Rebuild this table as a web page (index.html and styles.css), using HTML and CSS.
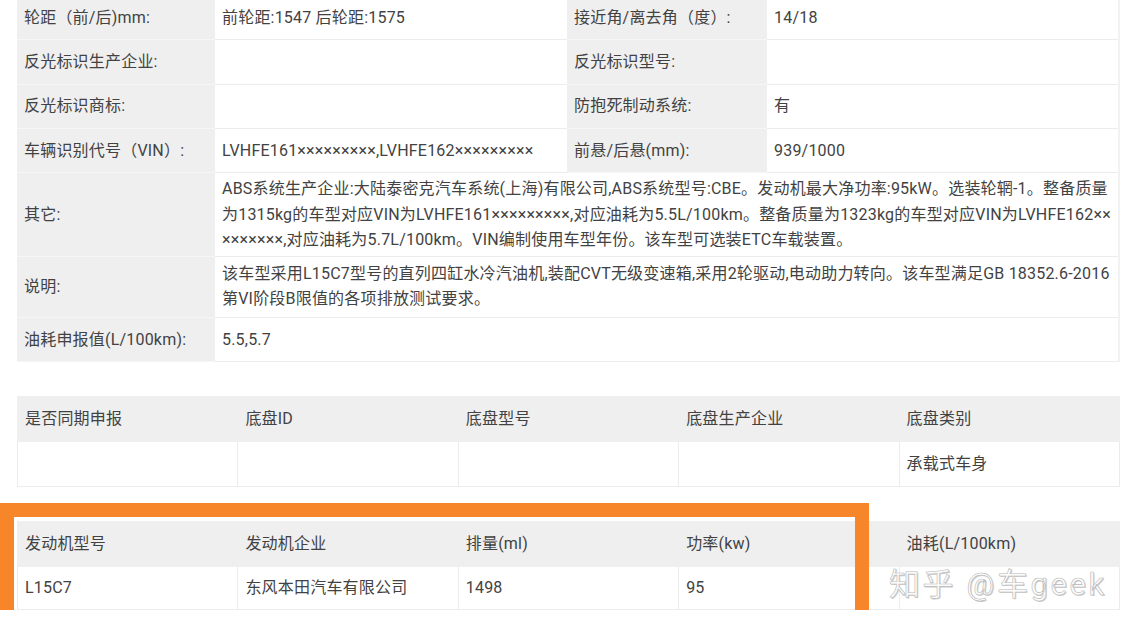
FILE: index.html
```html
<!DOCTYPE html>
<html lang="zh-CN">
  <head>
    <meta charset="UTF-8" />
    <meta name="viewport" content="width=device-width, initial-scale=1.0" />
    <title>车型参数</title>
    <link rel="stylesheet" href="styles.css">
  </head>
  <body>
    <div class="page">
      <table class="spec">
        <colgroup>
          <col class="c-label" />
          <col class="c-value" />
          <col class="c-label2" />
          <col class="c-value" />
        </colgroup>
        <tr>
          <td class="label">轮距（前/后)mm:</td>
          <td>前轮距:1547 后轮距:1575</td>
          <td class="label">接近角/离去角（度）:</td>
          <td>14/18</td>
        </tr>
        <tr>
          <td class="label">反光标识生产企业:</td>
          <td></td>
          <td class="label">反光标识型号:</td>
          <td></td>
        </tr>
        <tr>
          <td class="label">反光标识商标:</td>
          <td></td>
          <td class="label">防抱死制动系统:</td>
          <td>有</td>
        </tr>
        <tr>
          <td class="label">车辆识别代号（VIN）:</td>
          <td>LVHFE161×××××××××,LVHFE162×××××××××</td>
          <td class="label">前悬/后悬(mm):</td>
          <td>939/1000</td>
        </tr>
        <tr>
          <td class="label">其它:</td>
          <td colspan="3" class="long">ABS系统生产企业:大陆泰密克汽车系统(上海)有限公司,ABS系统型号:CBE。发动机最大净功率:95kW。选装轮辋-1。整备质量为1315kg的车型对应VIN为LVHFE161×××××××××,对应油耗为5.5L/100km。整备质量为1323kg的车型对应VIN为LVHFE162×××××××××,对应油耗为5.7L/100km。VIN编制使用车型年份。该车型可选装ETC车载装置。</td>
        </tr>
        <tr>
          <td class="label">说明:</td>
          <td colspan="3" class="long note">该车型采用L15C7型号的直列四缸水冷汽油机,装配CVT无级变速箱,采用2轮驱动,电动助力转向。该车型满足GB 18352.6-2016第VI阶段B限值的各项排放测试要求。</td>
        </tr>
        <tr>
          <td class="label">油耗申报值(L/100km):</td>
          <td colspan="3">5.5,5.7</td>
        </tr>
      </table>

      <table class="grid">
        <tr class="head">
          <td>是否同期申报</td>
          <td>底盘ID</td>
          <td>底盘型号</td>
          <td>底盘生产企业</td>
          <td>底盘类别</td>
        </tr>
        <tr>
          <td></td>
          <td></td>
          <td></td>
          <td></td>
          <td>承载式车身</td>
        </tr>
      </table>

      <div class="engine">
        <table class="grid">
          <tr class="head">
            <td>发动机型号</td>
            <td>发动机企业</td>
            <td>排量(ml)</td>
            <td>功率(kw)</td>
            <td>油耗(L/100km)</td>
          </tr>
          <tr class="short">
            <td>L15C7</td>
            <td>东风本田汽车有限公司</td>
            <td>1498</td>
            <td>95</td>
            <td></td>
          </tr>
        </table>
        <div class="highlight"></div>
        <div class="watermark">知乎 @车geek</div>
      </div>
    </div>
  </body>
</html>
```

FILE: styles.css
```css
/* Reset some default styles */
* {
  margin: 0;
  padding: 0;
  box-sizing: border-box;
}

body {
  font-family: Roboto, "Noto Sans CJK SC", sans-serif;
  font-size: 16px;
  letter-spacing: 0.2px;
  color: #424242;
  background-color: #fff;
  overflow: hidden;
}

.page {
  width: 1103px;
  margin: -5px 0 0 17px;
}

table {
  width: 1103px;
  border-collapse: collapse;
  table-layout: fixed;
}

td {
  padding: 0 7px;
  line-height: 25.5px;
  vertical-align: middle;
  border: 1px solid #ececec;
}

/* top spec table */
.c-label {
  width: 198px;
}

.c-label2 {
  width: 200px;
}

.c-value {
  width: 352px;
}

.spec td {
  height: 44.3px;
  border-left: none;
  border-right: none;
}

.spec td:last-child {
  border-right: 2px solid #f2f2f2;
}

.spec .label {
  background-color: #efefef;
  border-color: #f6f6f6;
}

.spec .long {
  word-break: break-all;
  padding-top: 3px;
  padding-bottom: 3px;
}

.spec .note {
  padding-top: 4px;
  padding-bottom: 5px;
}

/* chassis / engine grids */
.grid {
  margin-top: 34px;
}

.grid td {
  height: 45px;
}

.grid .head td {
  background-color: #efefef;
  border-color: #efefef;
}

.grid .short td {
  height: 43px;
}

.engine {
  position: relative;
}

.highlight {
  position: absolute;
  left: -17px;
  top: -18px;
  width: 869px;
  height: 123px;
  border: 14px solid #f7862b;
}

.watermark {
  position: absolute;
  left: 872px;
  top: 38px;
  font-size: 31px;
  letter-spacing: 2.6px;
  color: #fcfcfc;
  -webkit-text-stroke: 0.6px #b8b8b8;
  text-shadow: 1px 1px 0 #cfcfcf;
}
```
